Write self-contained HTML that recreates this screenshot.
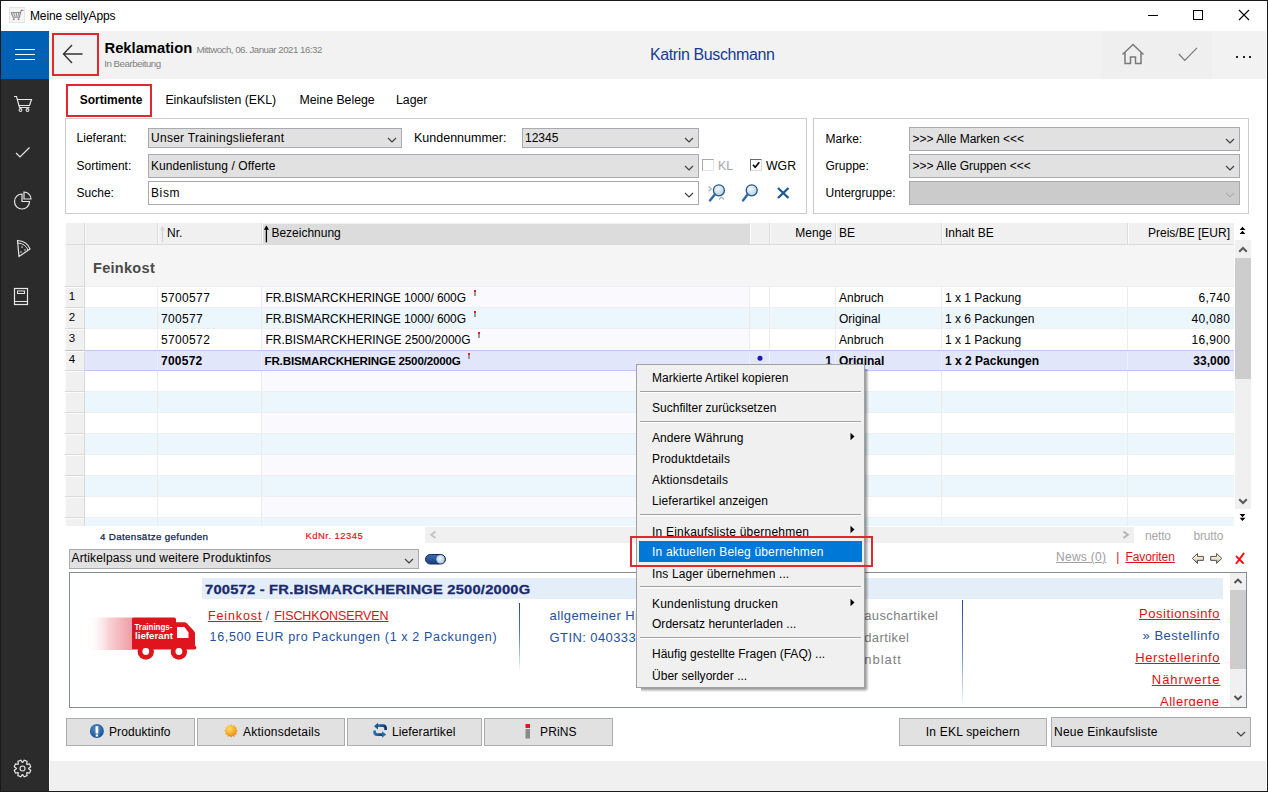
<!DOCTYPE html>
<html><head><meta charset="utf-8"><title>Reklamation</title>
<style>
html,body{margin:0;padding:0;width:1268px;height:792px;overflow:hidden;background:#fff;}
body{position:relative;font-family:"Liberation Sans", sans-serif;}
.t{position:absolute;line-height:1;white-space:pre;font-family:"Liberation Sans", sans-serif;}
.r{position:absolute;display:block;}
</style></head><body>
<div class="r" style="left:0px;top:0px;width:1268px;height:792px;background:#ffffff;"></div>
<svg class="r" style="left:9px;top:7px;" width="16" height="16" viewBox="0 0 16 16"><rect x="0.5" y="0.5" width="15" height="15" fill="#f5f5f5" stroke="#e4e4e4"/><path d="M2.2 5.6 L4.2 10.2 L10.4 10.2 L11.8 4.6 L12.4 3.3 L14.4 3.3" fill="none" stroke="#888" stroke-width="1.15"/><path d="M4.6 5.6 L5.8 9.6 M7.3 5.6 L7.3 9.6 M9.8 5.6 L8.9 9.6 M2.2 5.6 L11.5 5.6" fill="none" stroke="#8e8e8e" stroke-width="1"/><circle cx="4.8" cy="12.3" r="1" fill="#888"/><circle cx="9.6" cy="12.3" r="1" fill="#888"/></svg>
<div class="t" style="left:30.00px;top:9.54px;font-size:12px;color:#000;font-weight:400;letter-spacing:-0.13396875000000005px;">Meine sellyApps</div>
<div class="r" style="left:1148px;top:15px;width:10px;height:1px;background:#000;"></div>
<div class="r" style="left:1193px;top:10px;width:10px;height:10px;background:transparent;box-sizing:border-box;border:1px solid #000;"></div>
<svg class="r" style="left:1238px;top:9px;" width="12" height="12" viewBox="0 0 12 12"><path d="M1 1 L11 11 M11 1 L1 11" stroke="#000" stroke-width="1.1"/></svg>
<div class="r" style="left:0px;top:31px;width:49px;height:48px;background:#0060b4;"></div>
<div class="r" style="left:0px;top:79px;width:49px;height:712px;background:#2b2b2b;"></div>
<div class="r" style="left:15px;top:49px;width:20px;height:1px;background:#ffffff;"></div>
<div class="r" style="left:15px;top:54px;width:20px;height:1px;background:#ffffff;"></div>
<div class="r" style="left:15px;top:59px;width:20px;height:1px;background:#ffffff;"></div>
<svg class="r" style="left:12px;top:95px;" width="22" height="18" viewBox="0 0 22 18"><path d="M2 1.5 L4.5 1.5 L7.5 12.5 L17.5 12.5" fill="none" stroke="#e6e6e6" stroke-width="1.2"/><path d="M5.2 4.5 L19.5 4.5 L17.5 10.5 L6.8 10.5" fill="none" stroke="#e6e6e6" stroke-width="1.2"/><circle cx="8.5" cy="15" r="1.4" fill="none" stroke="#e6e6e6" stroke-width="1.1"/><circle cx="15.5" cy="15" r="1.4" fill="none" stroke="#e6e6e6" stroke-width="1.1"/></svg>
<svg class="r" style="left:14px;top:146px;" width="18" height="13" viewBox="0 0 18 13"><polyline points="2,7 6,11 15.5,1.5" fill="none" stroke="#e6e6e6" stroke-width="1.2"/></svg>
<svg class="r" style="left:12px;top:190px;" width="21" height="21" viewBox="0 0 21 21"><path d="M10 4 A7.5 7.5 0 1 0 17.5 11.5 L10 11.5 Z" fill="none" stroke="#e6e6e6" stroke-width="1.2"/><path d="M12 2 A7 7 0 0 1 19 9 L12 9 Z" fill="none" stroke="#e6e6e6" stroke-width="1.2"/></svg>
<svg class="r" style="left:15px;top:238px;" width="17" height="21" viewBox="0 0 17 21"><path d="M2.5 2.5 Q12 3 15 11 L4 18.5 Z" fill="none" stroke="#e6e6e6" stroke-width="1.2"/><path d="M2.6 5 Q10.5 5.5 13 12" fill="none" stroke="#e6e6e6" stroke-width="1"/><circle cx="7" cy="9" r="0.8" fill="#e6e6e6"/><circle cx="10" cy="12" r="0.8" fill="#e6e6e6"/><circle cx="6" cy="14" r="0.8" fill="#e6e6e6"/></svg>
<svg class="r" style="left:13px;top:287px;" width="16" height="19" viewBox="0 0 16 19"><rect x="1.5" y="1.5" width="13" height="16" fill="none" stroke="#e6e6e6" stroke-width="1.2"/><line x1="1.5" y1="14.5" x2="14.5" y2="14.5" stroke="#e6e6e6" stroke-width="1"/><rect x="4.5" y="4" width="7" height="2.5" fill="none" stroke="#e6e6e6" stroke-width="1"/></svg>
<svg class="r" style="left:11px;top:757px;" width="23" height="23" viewBox="0 0 23 23"><polygon points="19.73,13.19 18.51,16.12 15.95,15.67 15.67,15.95 16.12,18.51 13.19,19.73 11.70,17.60 11.30,17.60 9.81,19.73 6.88,18.51 7.33,15.95 7.05,15.67 4.49,16.12 3.27,13.19 5.40,11.70 5.40,11.30 3.27,9.81 4.49,6.88 7.05,7.33 7.33,7.05 6.88,4.49 9.81,3.27 11.30,5.40 11.70,5.40 13.19,3.27 16.12,4.49 15.67,7.05 15.95,7.33 18.51,6.88 19.73,9.81 17.60,11.30 17.60,11.70" fill="none" stroke="#e6e6e6" stroke-width="1.2"/><circle cx="11.5" cy="11.5" r="2.5" fill="none" stroke="#e6e6e6" stroke-width="1.1"/></svg>
<div class="r" style="left:49px;top:31px;width:1217px;height:48px;background:#f2f2f2;"></div>
<div class="r" style="left:52px;top:33px;width:47px;height:43px;background:transparent;box-sizing:border-box;border:2px solid #e0282e;"></div>
<svg class="r" style="left:60px;top:42px;" width="26" height="24" viewBox="0 0 26 24"><path d="M22.5 12 L4 12 M12 3 L3.5 12 L12 21" fill="none" stroke="#333" stroke-width="1.4"/></svg>
<div class="t" style="left:104.50px;top:40.51px;font-size:14.75px;color:#000;font-weight:700;letter-spacing:0px;">Reklamation</div>
<div class="t" style="left:196.50px;top:44.99px;font-size:9.7px;color:#808080;font-weight:400;letter-spacing:-0.49134942708333257px;">Mittwoch, 06. Januar 2021 16:32</div>
<div class="t" style="left:104.20px;top:59.39px;font-size:9.7px;color:#808080;font-weight:400;letter-spacing:-0.46905709134615353px;">In Bearbeitung</div>
<div class="t" style="left:650.00px;top:47.26px;font-size:16px;color:#173b95;font-weight:400;letter-spacing:-0.3823500000000005px;">Katrin Buschmann</div>
<div class="r" style="left:1102px;top:31px;width:110px;height:48px;background:#efefef;"></div>
<svg class="r" style="left:1120px;top:42px;" width="26" height="25" viewBox="0 0 26 25"><path d="M2.5 12.5 L13 2.5 L23.5 12.5 M5 10 L5 21.5 L10.5 21.5 L10.5 15 L15.5 15 L15.5 21.5 L21 21.5 L21 10" fill="none" stroke="#7a7a7a" stroke-width="1.5"/></svg>
<svg class="r" style="left:1177px;top:46px;" width="22" height="16" viewBox="0 0 22 16"><polyline points="1.8,8 7.8,14.4 20,1.9" fill="none" stroke="#7a7a7a" stroke-width="1.3"/></svg>
<div class="r" style="left:1236px;top:55.5px;width:2px;height:2px;background:#222;"></div>
<div class="r" style="left:1242.5px;top:55.5px;width:2px;height:2px;background:#222;"></div>
<div class="r" style="left:1249px;top:55.5px;width:2px;height:2px;background:#222;"></div>
<div class="r" style="left:66px;top:84px;width:86px;height:33px;background:transparent;box-sizing:border-box;border:2px solid #e0282e;"></div>
<div class="t" style="left:79.70px;top:93.84px;font-size:12px;color:#000;font-weight:700;letter-spacing:0px;">Sortimente</div>
<div class="t" style="left:165.40px;top:93.59px;font-size:12.3px;color:#000;font-weight:400;letter-spacing:0px;">Einkaufslisten (EKL)</div>
<div class="t" style="left:299.50px;top:93.59px;font-size:12.3px;color:#000;font-weight:400;letter-spacing:0px;">Meine Belege</div>
<div class="t" style="left:396.00px;top:93.59px;font-size:12.3px;color:#000;font-weight:400;letter-spacing:0px;">Lager</div>
<div class="r" style="left:65px;top:118px;width:742px;height:96px;background:transparent;box-sizing:border-box;border:1px solid #cccccc;"></div>
<div class="t" style="left:76.60px;top:132.24px;font-size:12px;color:#000;font-weight:400;letter-spacing:0px;">Lieferant:</div>
<div class="t" style="left:76.60px;top:159.74px;font-size:12px;color:#000;font-weight:400;letter-spacing:0px;">Sortiment:</div>
<div class="t" style="left:76.60px;top:186.64px;font-size:12px;color:#000;font-weight:400;letter-spacing:0px;">Suche:</div>
<div class="r" style="left:148px;top:128px;width:254px;height:20px;background:#e1e1e1;box-sizing:border-box;border:1px solid #a9a9b0;"></div>
<svg class="r" style="left:387px;top:135.5px;" width="10" height="8" viewBox="0 0 10 8"><polyline points="1,2.0 5,6.0 9,2.0" fill="none" stroke="#404040" stroke-width="1.15"/></svg>
<div class="t" style="left:151.00px;top:132.04px;font-size:12px;color:#000;font-weight:400;letter-spacing:0.2727173913043476px;">Unser Trainingslieferant</div>
<div class="t" style="left:414.00px;top:132.42px;font-size:12.5px;color:#000;font-weight:400;letter-spacing:0px;">Kundennummer:</div>
<div class="r" style="left:522px;top:128px;width:177px;height:20px;background:#e1e1e1;box-sizing:border-box;border:1px solid #a9a9b0;"></div>
<div class="t" style="left:525.00px;top:132.04px;font-size:12px;color:#000;font-weight:400;letter-spacing:0px;">12345</div>
<svg class="r" style="left:684px;top:135.5px;" width="10" height="8" viewBox="0 0 10 8"><polyline points="1,2.0 5,6.0 9,2.0" fill="none" stroke="#404040" stroke-width="1.15"/></svg>
<div class="r" style="left:148px;top:154px;width:551px;height:24px;background:#e1e1e1;box-sizing:border-box;border:1px solid #a9a9b0;"></div>
<svg class="r" style="left:684px;top:163.5px;" width="10" height="8" viewBox="0 0 10 8"><polyline points="1,2.0 5,6.0 9,2.0" fill="none" stroke="#404040" stroke-width="1.15"/></svg>
<div class="t" style="left:151.00px;top:159.74px;font-size:12px;color:#000;font-weight:400;letter-spacing:0.0806448863636362px;">Kundenlistung / Offerte</div>
<div class="r" style="left:148px;top:181px;width:551px;height:24px;background:#ffffff;box-sizing:border-box;border:1px solid #a9a9b0;"></div>
<svg class="r" style="left:684px;top:190.5px;" width="10" height="8" viewBox="0 0 10 8"><polyline points="1,2.0 5,6.0 9,2.0" fill="none" stroke="#404040" stroke-width="1.15"/></svg>
<div class="t" style="left:151.00px;top:186.64px;font-size:12px;color:#000;font-weight:400;letter-spacing:0.6112499999999995px;">Bism</div>
<div class="r" style="left:702px;top:159px;width:12px;height:12px;background:#fff;box-sizing:border-box;border:1px solid #e6e6e6;border-top-color:#a8a8a8;border-left-color:#a8a8a8"></div>
<div class="t" style="left:718.00px;top:159.59px;font-size:12.3px;color:#a6a6a6;font-weight:400;letter-spacing:0px;">KL</div>
<div class="r" style="left:750px;top:159px;width:12px;height:12px;background:#fff;box-sizing:border-box;border:1px solid #dcdcdc;border-top-color:#6a6a6a;border-left-color:#6a6a6a"></div>
<svg class="r" style="left:750px;top:159px;" width="12" height="12" viewBox="0 0 12 12"><polyline points="3,5.8 5.2,8.3 9.3,3.2" fill="none" stroke="#000" stroke-width="1.6"/></svg>
<div class="t" style="left:766.00px;top:159.59px;font-size:12.3px;color:#000;font-weight:400;letter-spacing:0px;">WGR</div>
<svg class="r" style="left:706px;top:183px;" width="22" height="21" viewBox="0 0 22 21"><defs><radialGradient id="lens" cx="0.4" cy="0.35" r="0.7"><stop offset="0" stop-color="#f2f6fa"/><stop offset="1" stop-color="#b8cce0"/></radialGradient></defs><path d="M2.5 3.5 L5.5 6 M2.5 8 L5.5 6 M18 16.5 L15.5 14 M13 16.5 L15.5 14" stroke="#9fb4c8" stroke-width="1.2" fill="none"/><circle cx="12.9" cy="7.3" r="5.5" fill="url(#lens)" stroke="#1f5a8a" stroke-width="1.3"/><line x1="8.8" y1="11.5" x2="4" y2="17.4" stroke="#2a6aa6" stroke-width="2.4" stroke-linecap="round"/></svg>
<svg class="r" style="left:740px;top:183px;" width="20" height="21" viewBox="0 0 20 21"><circle cx="11.7" cy="7.3" r="5.5" fill="url(#lens)" stroke="#1f5a8a" stroke-width="1.3"/><line x1="7.6" y1="11.5" x2="3" y2="17.4" stroke="#2a6aa6" stroke-width="2.4" stroke-linecap="round"/></svg>
<svg class="r" style="left:776px;top:186px;" width="15" height="14" viewBox="0 0 15 14"><path d="M2 2 L12.5 12 M12.5 2 L2 12" stroke="#1f5a92" stroke-width="2.4"/></svg>
<div class="r" style="left:813px;top:118px;width:436px;height:96px;background:transparent;box-sizing:border-box;border:1px solid #cccccc;"></div>
<div class="t" style="left:825.50px;top:132.84px;font-size:12px;color:#000;font-weight:400;letter-spacing:0px;">Marke:</div>
<div class="t" style="left:825.50px;top:159.84px;font-size:12px;color:#000;font-weight:400;letter-spacing:0px;">Gruppe:</div>
<div class="t" style="left:825.50px;top:186.84px;font-size:12px;color:#000;font-weight:400;letter-spacing:0px;">Untergruppe:</div>
<div class="r" style="left:909px;top:127px;width:331px;height:24px;background:#e1e1e1;box-sizing:border-box;border:1px solid #a9a9b0;"></div>
<div class="t" style="left:912.60px;top:133.24px;font-size:12px;color:#000;font-weight:400;letter-spacing:0px;">&gt;&gt;&gt; Alle Marken &lt;&lt;&lt;</div>
<svg class="r" style="left:1225px;top:136.5px;" width="10" height="8" viewBox="0 0 10 8"><polyline points="1,2.0 5,6.0 9,2.0" fill="none" stroke="#404040" stroke-width="1.15"/></svg>
<div class="r" style="left:909px;top:154px;width:331px;height:24px;background:#e1e1e1;box-sizing:border-box;border:1px solid #a9a9b0;"></div>
<div class="t" style="left:912.60px;top:159.84px;font-size:12px;color:#000;font-weight:400;letter-spacing:0px;">&gt;&gt;&gt; Alle Gruppen &lt;&lt;&lt;</div>
<svg class="r" style="left:1225px;top:163.5px;" width="10" height="8" viewBox="0 0 10 8"><polyline points="1,2.0 5,6.0 9,2.0" fill="none" stroke="#404040" stroke-width="1.15"/></svg>
<div class="r" style="left:909px;top:181px;width:331px;height:24px;background:#cbcbcb;box-sizing:border-box;border:1px solid #a9a9b0;"></div>
<svg class="r" style="left:1225px;top:190.5px;" width="10" height="8" viewBox="0 0 10 8"><polyline points="1,2.0 5,6.0 9,2.0" fill="none" stroke="#b0b0b0" stroke-width="1.15"/></svg>
<div class="r" style="left:65px;top:223px;width:1169px;height:303px;background:#ffffff;"></div>
<div class="r" style="left:65px;top:223px;width:1169px;height:21px;background:#f0f0f0;"></div>
<div class="r" style="left:262px;top:223px;width:1px;height:21px;background:#ffffff;"></div>
<div class="r" style="left:263px;top:224px;width:486px;height:20px;background:#dcdcdc;"></div>
<div class="r" style="left:65px;top:244px;width:1169px;height:1px;background:#dcdcdc;"></div>
<div class="r" style="left:84px;top:223px;width:1px;height:21px;background:#dcdcdc;"></div>
<div class="r" style="left:85px;top:223px;width:1px;height:21px;background:#fafafa;"></div>
<div class="r" style="left:157px;top:223px;width:1px;height:21px;background:#dcdcdc;"></div>
<div class="r" style="left:158px;top:223px;width:1px;height:21px;background:#fafafa;"></div>
<div class="r" style="left:261px;top:223px;width:1px;height:21px;background:#dcdcdc;"></div>
<div class="r" style="left:262px;top:223px;width:1px;height:21px;background:#fafafa;"></div>
<div class="r" style="left:749px;top:223px;width:1px;height:21px;background:#dcdcdc;"></div>
<div class="r" style="left:750px;top:223px;width:1px;height:21px;background:#fafafa;"></div>
<div class="r" style="left:769px;top:223px;width:1px;height:21px;background:#dcdcdc;"></div>
<div class="r" style="left:770px;top:223px;width:1px;height:21px;background:#fafafa;"></div>
<div class="r" style="left:835px;top:223px;width:1px;height:21px;background:#dcdcdc;"></div>
<div class="r" style="left:836px;top:223px;width:1px;height:21px;background:#fafafa;"></div>
<div class="r" style="left:941px;top:223px;width:1px;height:21px;background:#dcdcdc;"></div>
<div class="r" style="left:942px;top:223px;width:1px;height:21px;background:#fafafa;"></div>
<div class="r" style="left:1127px;top:223px;width:1px;height:21px;background:#dcdcdc;"></div>
<div class="r" style="left:1128px;top:223px;width:1px;height:21px;background:#fafafa;"></div>
<div class="t" style="left:167.00px;top:226.64px;font-size:12px;color:#000;font-weight:400;letter-spacing:0px;">Nr.</div>
<svg class="r" style="left:159px;top:224px;" width="7" height="19" viewBox="0 0 7 19"><path d="M3.5 4 L3.5 17.8" stroke="#d4d4d4" stroke-width="1.2"/><path d="M1 6.3 L3.5 2 L6 6.3 Z" fill="#d4d4d4"/></svg>
<div class="t" style="left:271.40px;top:226.64px;font-size:12px;color:#000;font-weight:400;letter-spacing:0px;">Bezeichnung</div>
<svg class="r" style="left:263px;top:224px;" width="7" height="19" viewBox="0 0 7 19"><path d="M3.4 3 L3.4 17.8" stroke="#000" stroke-width="1.3" stroke-linecap="round"/><path d="M0.8 5.8 L3.4 1.6 L6 5.8 Z" fill="#000"/></svg>
<div class="t" style="right:436.00px;top:226.64px;font-size:12px;color:#000;font-weight:400;letter-spacing:0px;">Menge</div>
<div class="t" style="left:839.00px;top:226.64px;font-size:12px;color:#000;font-weight:400;letter-spacing:0px;">BE</div>
<div class="t" style="left:945.00px;top:226.64px;font-size:12px;color:#000;font-weight:400;letter-spacing:0px;">Inhalt BE</div>
<div class="t" style="right:38.00px;top:226.64px;font-size:12px;color:#000;font-weight:400;letter-spacing:0px;">Preis/BE [EUR]</div>
<svg class="r" style="left:1239px;top:226px;" width="8" height="9" viewBox="0 0 8 9"><path d="M0.6 4 L6.4 4 L3.5 0.8 Z M0.6 8 L6.4 8 L3.5 4.8 Z" fill="#000"/></svg>
<div class="r" style="left:65px;top:245px;width:19px;height:281px;background:#f0f0f0;"></div>
<div class="r" style="left:65px;top:244px;width:19px;height:1px;background:#dcdcdc;"></div>
<div class="r" style="left:84px;top:223px;width:1px;height:303px;background:#d9d9d9;"></div>
<div class="r" style="left:65px;top:223px;width:1px;height:63px;background:#fcfcfc;"></div>
<div class="r" style="left:85px;top:245px;width:1149px;height:41px;background:#f5f5f5;"></div>
<div class="t" style="left:93.00px;top:261.33px;font-size:14.5px;color:#4a4a4a;font-weight:700;letter-spacing:0.3px;">Feinkost</div>
<div class="r" style="left:85px;top:286px;width:1149px;height:21px;background:#ffffff;"></div>
<div class="r" style="left:261px;top:286px;width:488px;height:21px;background:#fafafe;"></div>
<div class="r" style="left:157px;top:286px;width:1px;height:21px;background:#ececec;"></div>
<div class="r" style="left:261px;top:286px;width:1px;height:21px;background:#ececec;"></div>
<div class="r" style="left:749px;top:286px;width:1px;height:21px;background:#ececec;"></div>
<div class="r" style="left:769px;top:286px;width:1px;height:21px;background:#ececec;"></div>
<div class="r" style="left:835px;top:286px;width:1px;height:21px;background:#ececec;"></div>
<div class="r" style="left:941px;top:286px;width:1px;height:21px;background:#ececec;"></div>
<div class="r" style="left:1127px;top:286px;width:1px;height:21px;background:#ececec;"></div>
<div class="r" style="left:84px;top:286px;width:1px;height:21px;background:#d9d9d9;"></div>
<div class="r" style="left:65px;top:286px;width:19px;height:1px;background:#d9d9d9;"></div>
<div class="r" style="left:65px;top:287px;width:19px;height:1px;background:#fcfcfc;"></div>
<div class="r" style="left:65px;top:287px;width:1px;height:20px;background:#fcfcfc;"></div>
<div class="r" style="left:85px;top:286px;width:1149px;height:1px;background:#efeff3;"></div>
<div class="t" style="left:68.80px;top:291.47px;font-size:11.5px;color:#000;font-weight:400;letter-spacing:0px;">1</div>
<div class="t" style="left:161.00px;top:291.64px;font-size:12px;color:#000;font-weight:400;letter-spacing:0.35px;">5700577</div>
<div class="t" style="left:265.50px;top:291.64px;font-size:12px;color:#000;font-weight:400;letter-spacing:-0.079832589285714px;">FR.BISMARCKHERINGE 1000/ 600G</div>
<div class="r" style="left:474px;top:290px;width:2px;height:2px;background:#e02020;"></div>
<div class="r" style="left:474px;top:292px;width:2px;height:4px;background:#9a9a9a;"></div>
<div class="t" style="left:839.00px;top:291.64px;font-size:12px;color:#000;font-weight:400;letter-spacing:0px;">Anbruch</div>
<div class="t" style="left:945.00px;top:291.64px;font-size:12px;color:#000;font-weight:400;letter-spacing:0px;">1 x 1 Packung</div>
<div class="t" style="right:37.65px;top:291.64px;font-size:12px;color:#000;font-weight:400;letter-spacing:0.35px;">6,740</div>
<div class="r" style="left:85px;top:307px;width:1149px;height:21px;background:#ebf6fd;"></div>
<div class="r" style="left:157px;top:307px;width:1px;height:21px;background:#ececec;"></div>
<div class="r" style="left:261px;top:307px;width:1px;height:21px;background:#ececec;"></div>
<div class="r" style="left:749px;top:307px;width:1px;height:21px;background:#ececec;"></div>
<div class="r" style="left:769px;top:307px;width:1px;height:21px;background:#ececec;"></div>
<div class="r" style="left:835px;top:307px;width:1px;height:21px;background:#ececec;"></div>
<div class="r" style="left:941px;top:307px;width:1px;height:21px;background:#ececec;"></div>
<div class="r" style="left:1127px;top:307px;width:1px;height:21px;background:#ececec;"></div>
<div class="r" style="left:84px;top:307px;width:1px;height:21px;background:#d9d9d9;"></div>
<div class="r" style="left:65px;top:307px;width:19px;height:1px;background:#d9d9d9;"></div>
<div class="r" style="left:65px;top:308px;width:19px;height:1px;background:#fcfcfc;"></div>
<div class="r" style="left:65px;top:308px;width:1px;height:20px;background:#fcfcfc;"></div>
<div class="r" style="left:85px;top:307px;width:1149px;height:1px;background:#efeff3;"></div>
<div class="t" style="left:68.80px;top:312.47px;font-size:11.5px;color:#000;font-weight:400;letter-spacing:0px;">2</div>
<div class="t" style="left:161.00px;top:312.64px;font-size:12px;color:#000;font-weight:400;letter-spacing:0.35px;">700577</div>
<div class="t" style="left:265.50px;top:312.64px;font-size:12px;color:#000;font-weight:400;letter-spacing:-0.079832589285714px;">FR.BISMARCKHERINGE 1000/ 600G</div>
<div class="r" style="left:474px;top:311px;width:2px;height:2px;background:#e02020;"></div>
<div class="r" style="left:474px;top:313px;width:2px;height:4px;background:#9a9a9a;"></div>
<div class="t" style="left:839.00px;top:312.64px;font-size:12px;color:#000;font-weight:400;letter-spacing:0px;">Original</div>
<div class="t" style="left:945.00px;top:312.64px;font-size:12px;color:#000;font-weight:400;letter-spacing:0px;">1 x 6 Packungen</div>
<div class="t" style="right:37.65px;top:312.64px;font-size:12px;color:#000;font-weight:400;letter-spacing:0.35px;">40,080</div>
<div class="r" style="left:85px;top:328px;width:1149px;height:21px;background:#ffffff;"></div>
<div class="r" style="left:261px;top:328px;width:488px;height:21px;background:#fafafe;"></div>
<div class="r" style="left:157px;top:328px;width:1px;height:21px;background:#ececec;"></div>
<div class="r" style="left:261px;top:328px;width:1px;height:21px;background:#ececec;"></div>
<div class="r" style="left:749px;top:328px;width:1px;height:21px;background:#ececec;"></div>
<div class="r" style="left:769px;top:328px;width:1px;height:21px;background:#ececec;"></div>
<div class="r" style="left:835px;top:328px;width:1px;height:21px;background:#ececec;"></div>
<div class="r" style="left:941px;top:328px;width:1px;height:21px;background:#ececec;"></div>
<div class="r" style="left:1127px;top:328px;width:1px;height:21px;background:#ececec;"></div>
<div class="r" style="left:84px;top:328px;width:1px;height:21px;background:#d9d9d9;"></div>
<div class="r" style="left:65px;top:328px;width:19px;height:1px;background:#d9d9d9;"></div>
<div class="r" style="left:65px;top:329px;width:19px;height:1px;background:#fcfcfc;"></div>
<div class="r" style="left:65px;top:329px;width:1px;height:20px;background:#fcfcfc;"></div>
<div class="r" style="left:85px;top:328px;width:1149px;height:1px;background:#efeff3;"></div>
<div class="t" style="left:68.80px;top:333.47px;font-size:11.5px;color:#000;font-weight:400;letter-spacing:0px;">3</div>
<div class="t" style="left:161.00px;top:333.64px;font-size:12px;color:#000;font-weight:400;letter-spacing:0.35px;">5700572</div>
<div class="t" style="left:265.50px;top:333.64px;font-size:12px;color:#000;font-weight:400;letter-spacing:-0.03840178571428611px;">FR.BISMARCKHERINGE 2500/2000G</div>
<div class="r" style="left:478px;top:332px;width:2px;height:2px;background:#e02020;"></div>
<div class="r" style="left:478px;top:334px;width:2px;height:4px;background:#9a9a9a;"></div>
<div class="t" style="left:839.00px;top:333.64px;font-size:12px;color:#000;font-weight:400;letter-spacing:0px;">Anbruch</div>
<div class="t" style="left:945.00px;top:333.64px;font-size:12px;color:#000;font-weight:400;letter-spacing:0px;">1 x 1 Packung</div>
<div class="t" style="right:37.65px;top:333.64px;font-size:12px;color:#000;font-weight:400;letter-spacing:0.35px;">16,900</div>
<div class="r" style="left:85px;top:349px;width:1149px;height:21px;background:#e1e6fb;"></div>
<div class="r" style="left:85px;top:349px;width:1149px;height:1px;background:#ffffff;"></div>
<div class="r" style="left:261px;top:349px;width:488px;height:1px;background:#fafafe;"></div>
<div class="r" style="left:157px;top:349px;width:1px;height:21px;background:#eef0fd;"></div>
<div class="r" style="left:261px;top:349px;width:1px;height:21px;background:#eef0fd;"></div>
<div class="r" style="left:749px;top:349px;width:1px;height:21px;background:#eef0fd;"></div>
<div class="r" style="left:769px;top:349px;width:1px;height:21px;background:#eef0fd;"></div>
<div class="r" style="left:835px;top:349px;width:1px;height:21px;background:#eef0fd;"></div>
<div class="r" style="left:941px;top:349px;width:1px;height:21px;background:#eef0fd;"></div>
<div class="r" style="left:1127px;top:349px;width:1px;height:21px;background:#eef0fd;"></div>
<div class="r" style="left:84px;top:349px;width:1px;height:21px;background:#d9d9d9;"></div>
<div class="r" style="left:65px;top:350px;width:19px;height:1px;background:#c4c4c4;"></div>
<div class="r" style="left:65px;top:351px;width:19px;height:1px;background:#fcfcfc;"></div>
<div class="r" style="left:65px;top:351px;width:1px;height:19px;background:#fcfcfc;"></div>
<div class="t" style="left:68.80px;top:354.47px;font-size:11.5px;color:#000;font-weight:400;letter-spacing:0px;">4</div>
<div class="t" style="left:161.00px;top:354.64px;font-size:12px;color:#000;font-weight:700;letter-spacing:0.25px;">700572</div>
<div class="t" style="left:264.50px;top:354.98px;font-size:11.6px;color:#000;font-weight:700;letter-spacing:-0.1652162946428573px;">FR.BISMARCKHERINGE 2500/2000G</div>
<div class="r" style="left:468px;top:353px;width:2px;height:2px;background:#e02020;"></div>
<div class="r" style="left:468px;top:355px;width:2px;height:4px;background:#9a9a9a;"></div>
<svg class="r" style="left:756px;top:354px;" width="8" height="8" viewBox="0 0 8 8"><circle cx="4" cy="4.3" r="2.5" fill="#1818b8"/></svg>
<div class="t" style="right:436.00px;top:354.64px;font-size:12px;color:#000;font-weight:700;letter-spacing:0px;">1</div>
<div class="t" style="left:839.00px;top:354.64px;font-size:12px;color:#000;font-weight:700;letter-spacing:0px;">Original</div>
<div class="t" style="left:945.00px;top:354.64px;font-size:12px;color:#000;font-weight:700;letter-spacing:0px;">1 x 2 Packungen</div>
<div class="t" style="right:38.00px;top:354.64px;font-size:12px;color:#000;font-weight:700;letter-spacing:0px;">33,000</div>
<div class="r" style="left:85px;top:370px;width:1149px;height:21px;background:#ffffff;"></div>
<div class="r" style="left:261px;top:370px;width:488px;height:21px;background:#fafafe;"></div>
<div class="r" style="left:157px;top:370px;width:1px;height:21px;background:#ececec;"></div>
<div class="r" style="left:261px;top:370px;width:1px;height:21px;background:#ececec;"></div>
<div class="r" style="left:749px;top:370px;width:1px;height:21px;background:#ececec;"></div>
<div class="r" style="left:769px;top:370px;width:1px;height:21px;background:#ececec;"></div>
<div class="r" style="left:835px;top:370px;width:1px;height:21px;background:#ececec;"></div>
<div class="r" style="left:941px;top:370px;width:1px;height:21px;background:#ececec;"></div>
<div class="r" style="left:1127px;top:370px;width:1px;height:21px;background:#ececec;"></div>
<div class="r" style="left:84px;top:370px;width:1px;height:21px;background:#d9d9d9;"></div>
<div class="r" style="left:65px;top:370px;width:19px;height:1px;background:#d9d9d9;"></div>
<div class="r" style="left:65px;top:371px;width:19px;height:1px;background:#fcfcfc;"></div>
<div class="r" style="left:65px;top:371px;width:1px;height:20px;background:#fcfcfc;"></div>
<div class="r" style="left:85px;top:370px;width:1149px;height:1px;background:#c2c4f6;"></div>
<div class="r" style="left:85px;top:350px;width:1149px;height:1px;background:#c2c4f6;"></div>
<div class="r" style="left:85px;top:391px;width:1149px;height:21px;background:#ebf6fd;"></div>
<div class="r" style="left:157px;top:391px;width:1px;height:21px;background:#ececec;"></div>
<div class="r" style="left:261px;top:391px;width:1px;height:21px;background:#ececec;"></div>
<div class="r" style="left:749px;top:391px;width:1px;height:21px;background:#ececec;"></div>
<div class="r" style="left:769px;top:391px;width:1px;height:21px;background:#ececec;"></div>
<div class="r" style="left:835px;top:391px;width:1px;height:21px;background:#ececec;"></div>
<div class="r" style="left:941px;top:391px;width:1px;height:21px;background:#ececec;"></div>
<div class="r" style="left:1127px;top:391px;width:1px;height:21px;background:#ececec;"></div>
<div class="r" style="left:84px;top:391px;width:1px;height:21px;background:#d9d9d9;"></div>
<div class="r" style="left:65px;top:391px;width:19px;height:1px;background:#d9d9d9;"></div>
<div class="r" style="left:65px;top:392px;width:19px;height:1px;background:#fcfcfc;"></div>
<div class="r" style="left:65px;top:392px;width:1px;height:20px;background:#fcfcfc;"></div>
<div class="r" style="left:85px;top:391px;width:1149px;height:1px;background:#efeff3;"></div>
<div class="r" style="left:85px;top:412px;width:1149px;height:21px;background:#ffffff;"></div>
<div class="r" style="left:261px;top:412px;width:488px;height:21px;background:#fafafe;"></div>
<div class="r" style="left:157px;top:412px;width:1px;height:21px;background:#ececec;"></div>
<div class="r" style="left:261px;top:412px;width:1px;height:21px;background:#ececec;"></div>
<div class="r" style="left:749px;top:412px;width:1px;height:21px;background:#ececec;"></div>
<div class="r" style="left:769px;top:412px;width:1px;height:21px;background:#ececec;"></div>
<div class="r" style="left:835px;top:412px;width:1px;height:21px;background:#ececec;"></div>
<div class="r" style="left:941px;top:412px;width:1px;height:21px;background:#ececec;"></div>
<div class="r" style="left:1127px;top:412px;width:1px;height:21px;background:#ececec;"></div>
<div class="r" style="left:84px;top:412px;width:1px;height:21px;background:#d9d9d9;"></div>
<div class="r" style="left:65px;top:412px;width:19px;height:1px;background:#d9d9d9;"></div>
<div class="r" style="left:65px;top:413px;width:19px;height:1px;background:#fcfcfc;"></div>
<div class="r" style="left:65px;top:413px;width:1px;height:20px;background:#fcfcfc;"></div>
<div class="r" style="left:85px;top:412px;width:1149px;height:1px;background:#efeff3;"></div>
<div class="r" style="left:85px;top:433px;width:1149px;height:21px;background:#ebf6fd;"></div>
<div class="r" style="left:157px;top:433px;width:1px;height:21px;background:#ececec;"></div>
<div class="r" style="left:261px;top:433px;width:1px;height:21px;background:#ececec;"></div>
<div class="r" style="left:749px;top:433px;width:1px;height:21px;background:#ececec;"></div>
<div class="r" style="left:769px;top:433px;width:1px;height:21px;background:#ececec;"></div>
<div class="r" style="left:835px;top:433px;width:1px;height:21px;background:#ececec;"></div>
<div class="r" style="left:941px;top:433px;width:1px;height:21px;background:#ececec;"></div>
<div class="r" style="left:1127px;top:433px;width:1px;height:21px;background:#ececec;"></div>
<div class="r" style="left:84px;top:433px;width:1px;height:21px;background:#d9d9d9;"></div>
<div class="r" style="left:65px;top:433px;width:19px;height:1px;background:#d9d9d9;"></div>
<div class="r" style="left:65px;top:434px;width:19px;height:1px;background:#fcfcfc;"></div>
<div class="r" style="left:65px;top:434px;width:1px;height:20px;background:#fcfcfc;"></div>
<div class="r" style="left:85px;top:433px;width:1149px;height:1px;background:#efeff3;"></div>
<div class="r" style="left:85px;top:454px;width:1149px;height:21px;background:#ffffff;"></div>
<div class="r" style="left:261px;top:454px;width:488px;height:21px;background:#fafafe;"></div>
<div class="r" style="left:157px;top:454px;width:1px;height:21px;background:#ececec;"></div>
<div class="r" style="left:261px;top:454px;width:1px;height:21px;background:#ececec;"></div>
<div class="r" style="left:749px;top:454px;width:1px;height:21px;background:#ececec;"></div>
<div class="r" style="left:769px;top:454px;width:1px;height:21px;background:#ececec;"></div>
<div class="r" style="left:835px;top:454px;width:1px;height:21px;background:#ececec;"></div>
<div class="r" style="left:941px;top:454px;width:1px;height:21px;background:#ececec;"></div>
<div class="r" style="left:1127px;top:454px;width:1px;height:21px;background:#ececec;"></div>
<div class="r" style="left:84px;top:454px;width:1px;height:21px;background:#d9d9d9;"></div>
<div class="r" style="left:65px;top:454px;width:19px;height:1px;background:#d9d9d9;"></div>
<div class="r" style="left:65px;top:455px;width:19px;height:1px;background:#fcfcfc;"></div>
<div class="r" style="left:65px;top:455px;width:1px;height:20px;background:#fcfcfc;"></div>
<div class="r" style="left:85px;top:454px;width:1149px;height:1px;background:#efeff3;"></div>
<div class="r" style="left:85px;top:475px;width:1149px;height:21px;background:#ebf6fd;"></div>
<div class="r" style="left:157px;top:475px;width:1px;height:21px;background:#ececec;"></div>
<div class="r" style="left:261px;top:475px;width:1px;height:21px;background:#ececec;"></div>
<div class="r" style="left:749px;top:475px;width:1px;height:21px;background:#ececec;"></div>
<div class="r" style="left:769px;top:475px;width:1px;height:21px;background:#ececec;"></div>
<div class="r" style="left:835px;top:475px;width:1px;height:21px;background:#ececec;"></div>
<div class="r" style="left:941px;top:475px;width:1px;height:21px;background:#ececec;"></div>
<div class="r" style="left:1127px;top:475px;width:1px;height:21px;background:#ececec;"></div>
<div class="r" style="left:84px;top:475px;width:1px;height:21px;background:#d9d9d9;"></div>
<div class="r" style="left:65px;top:475px;width:19px;height:1px;background:#d9d9d9;"></div>
<div class="r" style="left:65px;top:476px;width:19px;height:1px;background:#fcfcfc;"></div>
<div class="r" style="left:65px;top:476px;width:1px;height:20px;background:#fcfcfc;"></div>
<div class="r" style="left:85px;top:475px;width:1149px;height:1px;background:#efeff3;"></div>
<div class="r" style="left:85px;top:496px;width:1149px;height:21px;background:#ffffff;"></div>
<div class="r" style="left:261px;top:496px;width:488px;height:21px;background:#fafafe;"></div>
<div class="r" style="left:157px;top:496px;width:1px;height:21px;background:#ececec;"></div>
<div class="r" style="left:261px;top:496px;width:1px;height:21px;background:#ececec;"></div>
<div class="r" style="left:749px;top:496px;width:1px;height:21px;background:#ececec;"></div>
<div class="r" style="left:769px;top:496px;width:1px;height:21px;background:#ececec;"></div>
<div class="r" style="left:835px;top:496px;width:1px;height:21px;background:#ececec;"></div>
<div class="r" style="left:941px;top:496px;width:1px;height:21px;background:#ececec;"></div>
<div class="r" style="left:1127px;top:496px;width:1px;height:21px;background:#ececec;"></div>
<div class="r" style="left:84px;top:496px;width:1px;height:21px;background:#d9d9d9;"></div>
<div class="r" style="left:65px;top:496px;width:19px;height:1px;background:#d9d9d9;"></div>
<div class="r" style="left:65px;top:497px;width:19px;height:1px;background:#fcfcfc;"></div>
<div class="r" style="left:65px;top:497px;width:1px;height:20px;background:#fcfcfc;"></div>
<div class="r" style="left:85px;top:496px;width:1149px;height:1px;background:#efeff3;"></div>
<div class="r" style="left:85px;top:517px;width:1149px;height:9px;background:#ebf6fd;"></div>
<div class="r" style="left:157px;top:517px;width:1px;height:9px;background:#ececec;"></div>
<div class="r" style="left:261px;top:517px;width:1px;height:9px;background:#ececec;"></div>
<div class="r" style="left:749px;top:517px;width:1px;height:9px;background:#ececec;"></div>
<div class="r" style="left:769px;top:517px;width:1px;height:9px;background:#ececec;"></div>
<div class="r" style="left:835px;top:517px;width:1px;height:9px;background:#ececec;"></div>
<div class="r" style="left:941px;top:517px;width:1px;height:9px;background:#ececec;"></div>
<div class="r" style="left:1127px;top:517px;width:1px;height:9px;background:#ececec;"></div>
<div class="r" style="left:84px;top:517px;width:1px;height:9px;background:#d9d9d9;"></div>
<div class="r" style="left:65px;top:517px;width:19px;height:1px;background:#d9d9d9;"></div>
<div class="r" style="left:65px;top:518px;width:19px;height:1px;background:#fcfcfc;"></div>
<div class="r" style="left:65px;top:518px;width:1px;height:8px;background:#fcfcfc;"></div>
<div class="r" style="left:85px;top:517px;width:1149px;height:1px;background:#efeff3;"></div>
<div class="r" style="left:1235px;top:240px;width:16px;height:269px;background:#f0f0f0;"></div>
<svg class="r" style="left:1235px;top:243px;" width="16" height="13" viewBox="0 0 16 13"><polyline points="4.2,8.8 8,5 11.8,8.8" fill="none" stroke="#5a5a5a" stroke-width="2.1"/></svg>
<div class="r" style="left:1235px;top:258px;width:16px;height:121px;background:#cdcdcd;"></div>
<svg class="r" style="left:1235px;top:493px;" width="16" height="16" viewBox="0 0 16 16"><polyline points="4.2,6.3 8,10.1 11.8,6.3" fill="none" stroke="#5a5a5a" stroke-width="2.1"/></svg>
<svg class="r" style="left:1239px;top:513px;" width="8" height="9" viewBox="0 0 8 9"><path d="M0.6 1 L6.4 1 L3.5 4.2 Z M0.6 4.8 L6.4 4.8 L3.5 8 Z" fill="#000"/></svg>
<div class="t" style="left:100.00px;top:531.90px;font-size:9.8px;color:#10244e;font-weight:400;letter-spacing:0.3327415624999993px;-webkit-text-stroke:0.25px #10244e">4 Datensätze gefunden</div>
<div class="t" style="left:305.40px;top:531.36px;font-size:9.5px;color:#e01010;font-weight:400;letter-spacing:0.46837109375000024px;-webkit-text-stroke:0.15px #e01010">KdNr. 12345</div>
<div class="r" style="left:425px;top:527px;width:709px;height:16px;background:#f0f0f0;"></div>
<svg class="r" style="left:425px;top:527px;" width="16" height="16" viewBox="0 0 16 16"><polyline points="10.5,4.5 6.2,7.8 10.5,11" fill="none" stroke="#c4c4c4" stroke-width="2"/></svg>
<svg class="r" style="left:1118px;top:527px;" width="16" height="16" viewBox="0 0 16 16"><polyline points="5.5,4.5 9.8,7.8 5.5,11" fill="none" stroke="#b4b4b4" stroke-width="2"/></svg>
<div class="t" style="left:1145.00px;top:529.54px;font-size:12px;color:#a8a8a8;font-weight:400;letter-spacing:-0.17237499999999972px;">netto</div>
<div class="t" style="left:1193.40px;top:529.54px;font-size:12px;color:#a8a8a8;font-weight:400;letter-spacing:-0.13713750000000005px;">brutto</div>
<div class="r" style="left:69px;top:549px;width:350px;height:20px;background:#e1e1e1;box-sizing:border-box;border:1px solid #a9a9b0;"></div>
<svg class="r" style="left:404px;top:556.5px;" width="10" height="8" viewBox="0 0 10 8"><polyline points="1,2.0 5,6.0 9,2.0" fill="none" stroke="#404040" stroke-width="1.15"/></svg>
<div class="t" style="left:71.50px;top:552.44px;font-size:12px;color:#000;font-weight:400;letter-spacing:0.15432321428571397px;">Artikelpass und weitere Produktinfos</div>
<svg class="r" style="left:424px;top:552px;" width="23" height="14" viewBox="0 0 23 14"><defs><linearGradient id="tgl" x1="0" x2="0" y1="0" y2="1"><stop offset="0" stop-color="#3a6eb0"/><stop offset="1" stop-color="#1a3e7a"/></linearGradient><radialGradient id="knob" cx="0.45" cy="0.4" r="0.6"><stop offset="0" stop-color="#f4f8fc"/><stop offset="1" stop-color="#a8c4e4"/></radialGradient></defs><rect x="1.5" y="2.5" width="20" height="9.5" rx="4.75" fill="url(#tgl)" stroke="#142c58" stroke-width="1"/><circle cx="16.5" cy="7.25" r="4.2" fill="url(#knob)"/></svg>
<div class="t" style="left:1056.00px;top:550.84px;font-size:12px;color:#a0a0a0;font-weight:400;letter-spacing:0.2848303571428567px;text-decoration:underline">News (0)</div>
<div class="t" style="left:1116.20px;top:550.84px;font-size:12px;color:#e01010;font-weight:400;letter-spacing:0px;">|</div>
<div class="t" style="left:1125.40px;top:550.84px;font-size:12px;color:#e01010;font-weight:400;letter-spacing:-0.06522656250000036px;text-decoration:underline">Favoriten</div>
<svg class="r" style="left:1190px;top:551px;" width="34" height="14" viewBox="0 0 34 14"><defs><linearGradient id="ag" x1="0" x2="0" y1="0" y2="1"><stop offset="0" stop-color="#f8f4e0"/><stop offset="0.55" stop-color="#e8e4c8"/><stop offset="1" stop-color="#8a8a8a"/></linearGradient></defs><path d="M2.3 7.4 L7.5 2.5 L7.5 5.4 L13.4 5.4 L13.4 9.4 L7.5 9.4 L7.5 12.4 Z" fill="url(#ag)" stroke="#555" stroke-width="1"/><path d="M31.8 7.4 L26.6 2.5 L26.6 5.4 L20.7 5.4 L20.7 9.4 L26.6 9.4 L26.6 12.4 Z" fill="url(#ag)" stroke="#555" stroke-width="1"/></svg>
<svg class="r" style="left:1234px;top:551px;" width="12" height="15" viewBox="0 0 12 15"><path d="M2.4 12.3 L9.6 2.6 M2.6 5.6 L9 12" stroke="#ff0a0a" stroke-width="1.9" stroke-linecap="round"/></svg>
<div class="r" style="left:69px;top:572px;width:1178px;height:136px;background:#ffffff;box-sizing:border-box;border:1px solid #888c94;"></div>
<div class="r" style="left:202px;top:578px;width:1021px;height:21px;background:#e4eef9;"></div>
<div class="t" style="left:204.80px;top:583.00px;font-size:13px;color:#1a2a6c;font-weight:700;letter-spacing:0.2px;transform:scaleX(1.13);transform-origin:0 0;-webkit-text-stroke:0.3px #1a2a6c">700572 - FR.BISMARCKHERINGE 2500/2000G</div>
<svg class="r" style="left:80px;top:600px" width="120" height="70" viewBox="0 0 120 70">
<defs><linearGradient id="tg" x1="0" x2="1" y1="0" y2="0"><stop offset="0" stop-color="#ffffff" stop-opacity="0"/><stop offset="0.5" stop-color="#f8d0d4"/><stop offset="1" stop-color="#f09aa2"/></linearGradient></defs>
<rect x="6" y="17.5" width="47" height="32.5" fill="url(#tg)"/>
<path d="M53.5 17.5 L94 17.5 Q96 17.5 96 19.5 L96 22.2 L104.5 22.2 Q106 22.2 107 23.5 L114 31 L115 33 L115 45.5 L116.5 47 Q116.5 49.5 114.5 49.5 L53.5 49.5 Q52 49.5 52 48 L52 19 Q52 17.5 53.5 17.5 Z" fill="#e0141c"/>
<path d="M97 27 L104.5 27 L108.5 32.5 L108.5 38 L97 38 Z" fill="#ffffff"/>
<circle cx="65.8" cy="51.5" r="8.2" fill="#e0141c"/><circle cx="65.8" cy="51.5" r="3.4" fill="#fff"/>
<circle cx="98.9" cy="51.5" r="8.2" fill="#e0141c"/><circle cx="98.9" cy="51.5" r="3.4" fill="#fff"/>
<text x="54.4" y="29.8" font-family="Liberation Sans" font-weight="bold" font-size="9.2" fill="#fff" textLength="38" lengthAdjust="spacingAndGlyphs">Trainings-</text>
<text x="55" y="39.3" font-family="Liberation Sans" font-weight="bold" font-size="9.2" fill="#fff" textLength="38" lengthAdjust="spacingAndGlyphs">lieferant</text>
</svg>
<div class="t" style="left:207.90px;top:610.02px;font-size:12.5px;color:#e01010;font-weight:400;letter-spacing:0.8940848214285718px;text-decoration:underline">Feinkost</div>
<div class="t" style="left:265.50px;top:610.02px;font-size:12.5px;color:#24509c;font-weight:400;letter-spacing:0px;">/</div>
<div class="t" style="left:274.30px;top:610.02px;font-size:12.5px;color:#e01010;font-weight:400;letter-spacing:-0.11278545673076988px;text-decoration:underline">FISCHKONSERVEN</div>
<div class="t" style="left:209.60px;top:631.42px;font-size:12.5px;color:#24509c;font-weight:400;letter-spacing:0.6444216844512201px;">16,500 EUR pro Packungen (1 x 2 Packungen)</div>
<div class="r" style="left:519px;top:603px;width:1px;height:68px;background:linear-gradient(#1f4a9a,#5a84c0 50%,#ffffff)"></div>
<div class="t" style="left:549.60px;top:609.00px;font-size:13px;color:#24509c;font-weight:400;letter-spacing:0.4px;">allgemeiner Hinweis</div>
<div class="t" style="left:549.60px;top:631.00px;font-size:13px;color:#24509c;font-weight:400;letter-spacing:0.4px;">GTIN: 04033300123456</div>
<div class="t" style="right:329.70px;top:608.80px;font-size:13px;color:#808080;font-weight:400;letter-spacing:0.4px;">Austauschartikel</div>
<div class="t" style="right:358.70px;top:630.50px;font-size:13px;color:#808080;font-weight:400;letter-spacing:0.4px;">Standardartikel</div>
<div class="t" style="right:366.13px;top:652.60px;font-size:13px;color:#808080;font-weight:400;letter-spacing:0.9708975694444446px;">Datenblatt</div>
<div class="r" style="left:962px;top:600px;width:1px;height:107px;background:linear-gradient(#1f4a9a,#6a90c8 50%,#ffffff)"></div>
<div class="t" style="right:48.04px;top:607.20px;font-size:13px;color:#e01010;font-weight:400;letter-spacing:0.5575507812500007px;text-decoration:underline">Positionsinfo</div>
<div class="t" style="right:48.10px;top:628.70px;font-size:13px;color:#24509c;font-weight:400;letter-spacing:0.5px;">» Bestellinfo</div>
<div class="t" style="right:48.01px;top:650.60px;font-size:13px;color:#e01010;font-weight:400;letter-spacing:0.5857668269230771px;text-decoration:underline">Herstellerinfo</div>
<div class="t" style="right:47.65px;top:672.50px;font-size:13px;color:#e01010;font-weight:400;letter-spacing:0.9541542968749992px;text-decoration:underline">Nährwerte</div>
<div class="r" style="left:70px;top:573px;width:1176px;height:133px;overflow:hidden"><div class="t" style="right:26.6px;top:121.50px;font-size:13px;color:#e01010;letter-spacing:0.5px;text-decoration:underline">Allergene</div></div>
<div class="r" style="left:1230px;top:573px;width:16px;height:134px;background:#f0f0f0;"></div>
<svg class="r" style="left:1230px;top:573px;" width="16" height="16" viewBox="0 0 16 16"><polyline points="4.5,10 8,6.5 11.5,10" fill="none" stroke="#505050" stroke-width="1.9"/></svg>
<div class="r" style="left:1230px;top:590px;width:16px;height:79px;background:#cdcdcd;"></div>
<svg class="r" style="left:1230px;top:690px;" width="16" height="16" viewBox="0 0 16 16"><polyline points="4.5,6 8,9.5 11.5,6" fill="none" stroke="#505050" stroke-width="1.9"/></svg>
<div class="r" style="left:66px;top:718px;width:129px;height:28px;background:#e1e1e1;box-sizing:border-box;border:1px solid #adadad;"></div>
<div class="t" style="left:109.00px;top:725.54px;font-size:12px;color:#000;font-weight:400;letter-spacing:0.07965000000000018px;">Produktinfo</div>
<svg class="r" style="left:84px;top:718px" width="24" height="24"><defs><radialGradient id="ig" cx="0.45" cy="0.35" r="0.7"><stop offset="0" stop-color="#5a90c8"/><stop offset="1" stop-color="#0d4a92"/></radialGradient></defs><circle cx="12.9" cy="13" r="7" fill="url(#ig)"/><rect x="11.6" y="8.2" width="2.7" height="7.3" fill="#fff"/><rect x="11.7" y="16.4" width="2.5" height="2.2" fill="#fff"/></svg>
<div class="r" style="left:197px;top:718px;width:148px;height:28px;background:#e1e1e1;box-sizing:border-box;border:1px solid #adadad;"></div>
<div class="t" style="left:243.00px;top:725.54px;font-size:12px;color:#000;font-weight:400;letter-spacing:0.2277355769230765px;">Aktionsdetails</div>
<svg class="r" style="left:222px;top:722px" width="18" height="18"><defs><radialGradient id="sg" cx="0.4" cy="0.35" r="0.75"><stop offset="0" stop-color="#ffe060"/><stop offset="0.6" stop-color="#f5a020"/><stop offset="1" stop-color="#e06a10"/></radialGradient></defs><polygon points="15.80,8.80 14.12,10.17 14.89,12.20 12.75,12.55 12.40,14.69 10.37,13.92 9.00,15.60 7.63,13.92 5.60,14.69 5.25,12.55 3.11,12.20 3.88,10.17 2.20,8.80 3.88,7.43 3.11,5.40 5.25,5.05 5.60,2.91 7.63,3.68 9.00,2.00 10.37,3.68 12.40,2.91 12.75,5.05 14.89,5.40 14.12,7.43" fill="url(#sg)"/></svg>
<div class="r" style="left:347px;top:718px;width:135px;height:28px;background:#e1e1e1;box-sizing:border-box;border:1px solid #adadad;"></div>
<div class="t" style="left:392.00px;top:725.54px;font-size:12px;color:#000;font-weight:400;letter-spacing:0.11434895833333296px;">Lieferartikel</div>
<svg class="r" style="left:368px;top:718px" width="24" height="24"><defs><linearGradient id="lg" x1="0" x2="1"><stop offset="0" stop-color="#2f70b0"/><stop offset="1" stop-color="#0c3d70"/></linearGradient></defs><path d="M9.5 7.6 L15 7.6 Q17.6 7.6 17.6 10.6 L17.6 12" fill="none" stroke="url(#lg)" stroke-width="2.8"/><path d="M6 8.2 L10 4.8 L10 11.6 Z" fill="#1a5a98"/><path d="M14.5 16.6 L9 16.6 Q6.6 16.6 6.6 13.8 L6.6 12.4" fill="none" stroke="url(#lg)" stroke-width="2.8"/><path d="M18.2 16.4 L14 13.2 L14 19.8 Z" fill="#2a6aa8"/></svg>
<div class="r" style="left:484px;top:718px;width:129px;height:28px;background:#e1e1e1;box-sizing:border-box;border:1px solid #adadad;"></div>
<div class="t" style="left:540.00px;top:725.54px;font-size:12px;color:#000;font-weight:400;letter-spacing:0.14845312499999963px;">PRiNS</div>
<svg class="r" style="left:525px;top:724px" width="6" height="15"><rect x="0.5" y="0" width="4.5" height="4" fill="#d81c24"/><rect x="0.5" y="5" width="4.5" height="9.5" fill="#8a8a8a"/></svg>
<div class="r" style="left:899px;top:718px;width:148px;height:28px;background:#e1e1e1;box-sizing:border-box;border:1px solid #adadad;"></div>
<div class="t" style="left:925.80px;top:725.64px;font-size:12px;color:#000;font-weight:400;letter-spacing:0.2037416666666663px;">In EKL speichern</div>
<div class="r" style="left:1051px;top:717px;width:200px;height:30px;background:#e1e1e1;box-sizing:border-box;border:1px solid #a9a9b0;"></div>
<svg class="r" style="left:1236px;top:729.5px;" width="10" height="8" viewBox="0 0 10 8"><polyline points="1,2.0 5,6.0 9,2.0" fill="none" stroke="#404040" stroke-width="1.15"/></svg>
<div class="t" style="left:1054.00px;top:725.64px;font-size:12px;color:#000;font-weight:400;letter-spacing:0.24193014705882376px;">Neue Einkaufsliste</div>
<div class="r" style="left:50px;top:761px;width:1216px;height:30px;background:#f0f0f0;"></div>
<div class="r" style="left:865px;top:369px;width:4px;height:319px;background:linear-gradient(to right,rgba(0,0,0,0.42),rgba(0,0,0,0.22) 50%,rgba(0,0,0,0))"></div>
<div class="r" style="left:641px;top:688px;width:224px;height:4px;background:linear-gradient(to bottom,rgba(0,0,0,0.42),rgba(0,0,0,0.22) 50%,rgba(0,0,0,0))"></div>
<div class="r" style="left:865px;top:688px;width:4px;height:4px;background:radial-gradient(circle at 0 0,rgba(0,0,0,0.4),rgba(0,0,0,0) 4px)"></div>
<div class="r" style="left:636px;top:364px;width:229px;height:324px;background:#f0f0f0;box-sizing:border-box;border:1px solid #a0a0a0;"></div>
<div class="r" style="left:640px;top:391px;width:221px;height:1px;background:#a0a0a0;"></div>
<div class="r" style="left:640px;top:392px;width:221px;height:1px;background:#ffffff;"></div>
<div class="r" style="left:640px;top:421px;width:221px;height:1px;background:#a0a0a0;"></div>
<div class="r" style="left:640px;top:422px;width:221px;height:1px;background:#ffffff;"></div>
<div class="r" style="left:640px;top:514px;width:221px;height:1px;background:#a0a0a0;"></div>
<div class="r" style="left:640px;top:515px;width:221px;height:1px;background:#ffffff;"></div>
<div class="r" style="left:640px;top:586px;width:221px;height:1px;background:#a0a0a0;"></div>
<div class="r" style="left:640px;top:587px;width:221px;height:1px;background:#ffffff;"></div>
<div class="r" style="left:640px;top:637px;width:221px;height:1px;background:#a0a0a0;"></div>
<div class="r" style="left:640px;top:638px;width:221px;height:1px;background:#ffffff;"></div>
<div class="r" style="left:639px;top:541px;width:223px;height:21px;background:#0078d7;"></div>
<div class="t" style="left:652.00px;top:372.34px;font-size:12px;color:#000;font-weight:400;letter-spacing:0.04048999999999978px;">Markierte Artikel kopieren</div>
<div class="t" style="left:652.00px;top:402.14px;font-size:12px;color:#000;font-weight:400;letter-spacing:0.01112499999999983px;">Suchfilter zurücksetzen</div>
<div class="t" style="left:652.00px;top:432.24px;font-size:12px;color:#000;font-weight:400;letter-spacing:0.0522067307692315px;">Andere Währung</div>
<svg class="r" style="left:849px;top:432px;" width="8" height="9" viewBox="0 0 8 9"><path d="M1.5 0.8 L5.5 4.5 L1.5 8.2 Z" fill="#000"/></svg>
<div class="t" style="left:652.00px;top:453.34px;font-size:12px;color:#000;font-weight:400;letter-spacing:0.14281250000000073px;">Produktdetails</div>
<div class="t" style="left:652.00px;top:474.24px;font-size:12px;color:#000;font-weight:400;letter-spacing:0.14312019230769232px;">Aktionsdetails</div>
<div class="t" style="left:652.00px;top:495.44px;font-size:12px;color:#000;font-weight:400;letter-spacing:0.09185416666666683px;">Lieferartikel anzeigen</div>
<div class="t" style="left:652.00px;top:525.54px;font-size:12px;color:#000;font-weight:400;letter-spacing:0.2144375000000003px;">In Einkaufsliste übernehmen</div>
<svg class="r" style="left:849px;top:525px;" width="8" height="9" viewBox="0 0 8 9"><path d="M1.5 0.8 L5.5 4.5 L1.5 8.2 Z" fill="#000"/></svg>
<div class="t" style="left:652.00px;top:546.44px;font-size:12px;color:#ffffff;font-weight:400;letter-spacing:0.1921383928571428px;">In aktuellen Beleg übernehmen</div>
<div class="t" style="left:652.00px;top:567.54px;font-size:12px;color:#000;font-weight:400;letter-spacing:0.13536956521739077px;">Ins Lager übernehmen ...</div>
<div class="t" style="left:652.00px;top:597.84px;font-size:12px;color:#000;font-weight:400;letter-spacing:0.19066562500000045px;">Kundenlistung drucken</div>
<svg class="r" style="left:849px;top:598px;" width="8" height="9" viewBox="0 0 8 9"><path d="M1.5 0.8 L5.5 4.5 L1.5 8.2 Z" fill="#000"/></svg>
<div class="t" style="left:652.00px;top:618.34px;font-size:12px;color:#000;font-weight:400;letter-spacing:0.03812259615384597px;">Ordersatz herunterladen ...</div>
<div class="t" style="left:652.00px;top:648.34px;font-size:12px;color:#000;font-weight:400;letter-spacing:0.011220703124999787px;">Häufig gestellte Fragen (FAQ) ...</div>
<div class="t" style="left:652.00px;top:669.84px;font-size:12px;color:#000;font-weight:400;letter-spacing:0.027795138888889268px;">Über sellyorder ...</div>
<div class="r" style="left:630px;top:536px;width:243px;height:31px;background:transparent;box-sizing:border-box;border:2px solid #e0282e;"></div>
<div class="r" style="left:0;top:0;width:1268px;height:1px;background:#1a1a1a"></div>
<div class="r" style="left:1267px;top:0;width:1px;height:792px;background:#1a1a1a"></div>
<div class="r" style="left:0;top:791px;width:1268px;height:1px;background:#1a1a1a"></div>
<div class="r" style="left:0;top:0;width:1px;height:792px;background:#1a1a1a"></div>
</body></html>
